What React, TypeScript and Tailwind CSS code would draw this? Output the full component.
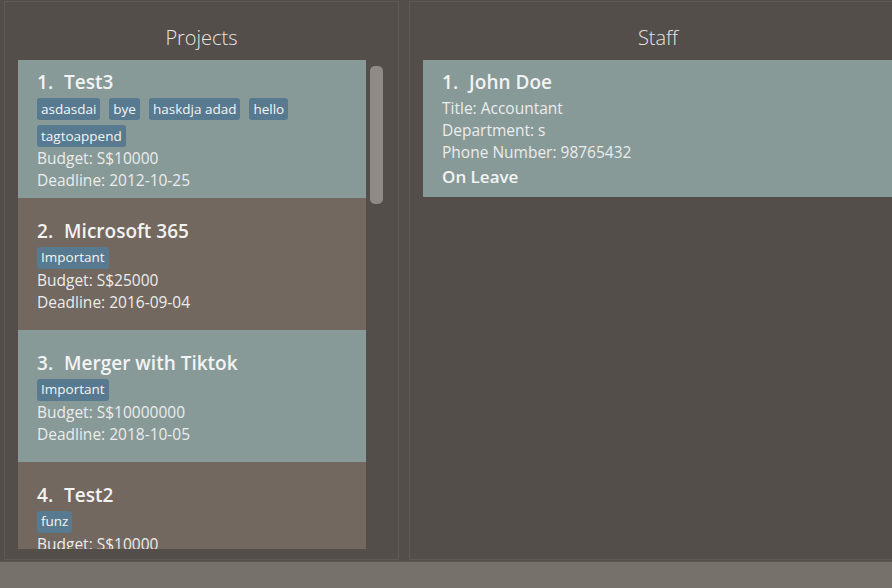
import React from "react";

const font = { fontFamily: '"Open Sans", "Noto Sans", sans-serif' };

type Project = { n: number; name: string; tags: string[]; budget: string; deadline: string };

const projects: Project[] = [
  { n: 1, name: "Test3", tags: ["asdasdai", "bye", "haskdja adad", "hello", "tagtoappend"], budget: "S$10000", deadline: "2012-10-25" },
  { n: 2, name: "Microsoft 365", tags: ["Important"], budget: "S$25000", deadline: "2016-09-04" },
  { n: 3, name: "Merger with Tiktok", tags: ["Important"], budget: "S$10000000", deadline: "2018-10-05" },
  { n: 4, name: "Test2", tags: ["funz"], budget: "S$10000", deadline: "2019-01-01" },
];

function Title({ n, name }: { n: number; name: string }) {
  return (
    <div className="flex h-[26px] items-center text-[19px] font-semibold leading-[26px] text-[#f3f3f3]">
      <span>{n}.</span>
      <span className="ml-[11px]">{name}</span>
    </div>
  );
}

function ProjectCard({ p, i }: { p: Project; i: number }) {
  const bg = i % 2 === 0 ? "bg-[#879a98]" : "bg-[#72685f]";
  return (
    <div className={`${bg} flex min-h-[132px] flex-col justify-center pt-[9px] pb-[7px] pl-[19px] pr-2`}>
      <Title n={p.n} name={p.name} />
      <div className="mt-[3px] flex flex-wrap gap-x-[9px] gap-y-[5px]">
        {p.tags.map((t) => (
          <span
            key={t}
            className="flex h-[22px] items-center rounded-[3px] bg-[#577a90] px-[4px] text-[13.5px] text-[#f5f5f5]"
          >
            {t}
          </span>
        ))}
      </div>
      <div className="text-[15.5px] leading-[22px] text-[#ececec]">Budget: {p.budget}</div>
      <div className="text-[15.5px] leading-[22px] text-[#ececec]">Deadline: {p.deadline}</div>
    </div>
  );
}

export default function App() {
  return (
    <div className="flex h-[588px] w-[892px] flex-col overflow-hidden bg-[#534e49]" style={font}>
      <div className="flex h-[561px] pl-[4px] pt-[1px]">
        {/* Projects panel */}
        <div className="flex h-[559px] w-[395px] shrink-0 flex-col border border-[#5e5954]">
          <div className="flex h-[58px] shrink-0 items-center justify-center pt-[13px] text-[20px] font-light text-[#e8e6e3]">
            Projects
          </div>
          <div className="flex min-h-0 flex-1 pl-[13px] pb-[10px] pr-[14px]">
            <div className="w-[348px] overflow-hidden">
              {projects.map((p, i) => (
                <ProjectCard key={p.n} p={p} i={i} />
              ))}
            </div>
            <div className="ml-[4px] w-[14px] pt-[6px]">
              <div className="h-[138px] w-[13px] rounded-[5px] bg-[#8f8a85]" />
            </div>
          </div>
        </div>
        {/* Staff panel */}
        <div className="ml-[10px] flex h-[559px] w-[498px] shrink-0 flex-col border border-[#5e5954]">
          <div className="flex h-[58px] shrink-0 items-center justify-center pt-[13px] text-[20px] font-light text-[#e8e6e3]">
            Staff
          </div>
          <div className="pl-[13px]">
            <div className="bg-[#879a98] pt-[9px] pb-[7px] pl-[19px]">
              <Title n={1} name="John Doe" />
              <div className="mt-[2px] text-[15.5px] leading-[22px] text-[#ececec]">Title: Accountant</div>
              <div className="text-[15.5px] leading-[22px] text-[#ececec]">Department: s</div>
              <div className="text-[15.5px] leading-[22px] text-[#ececec]">Phone Number: 98765432</div>
              <div className="mt-[1px] text-[17px] font-semibold leading-[26px] text-[#f3f3f3]">On Leave</div>
            </div>
          </div>
        </div>
      </div>
      <div className="flex-1 border-t border-[#5e5954] bg-[#76716b]" />
    </div>
  );
}
